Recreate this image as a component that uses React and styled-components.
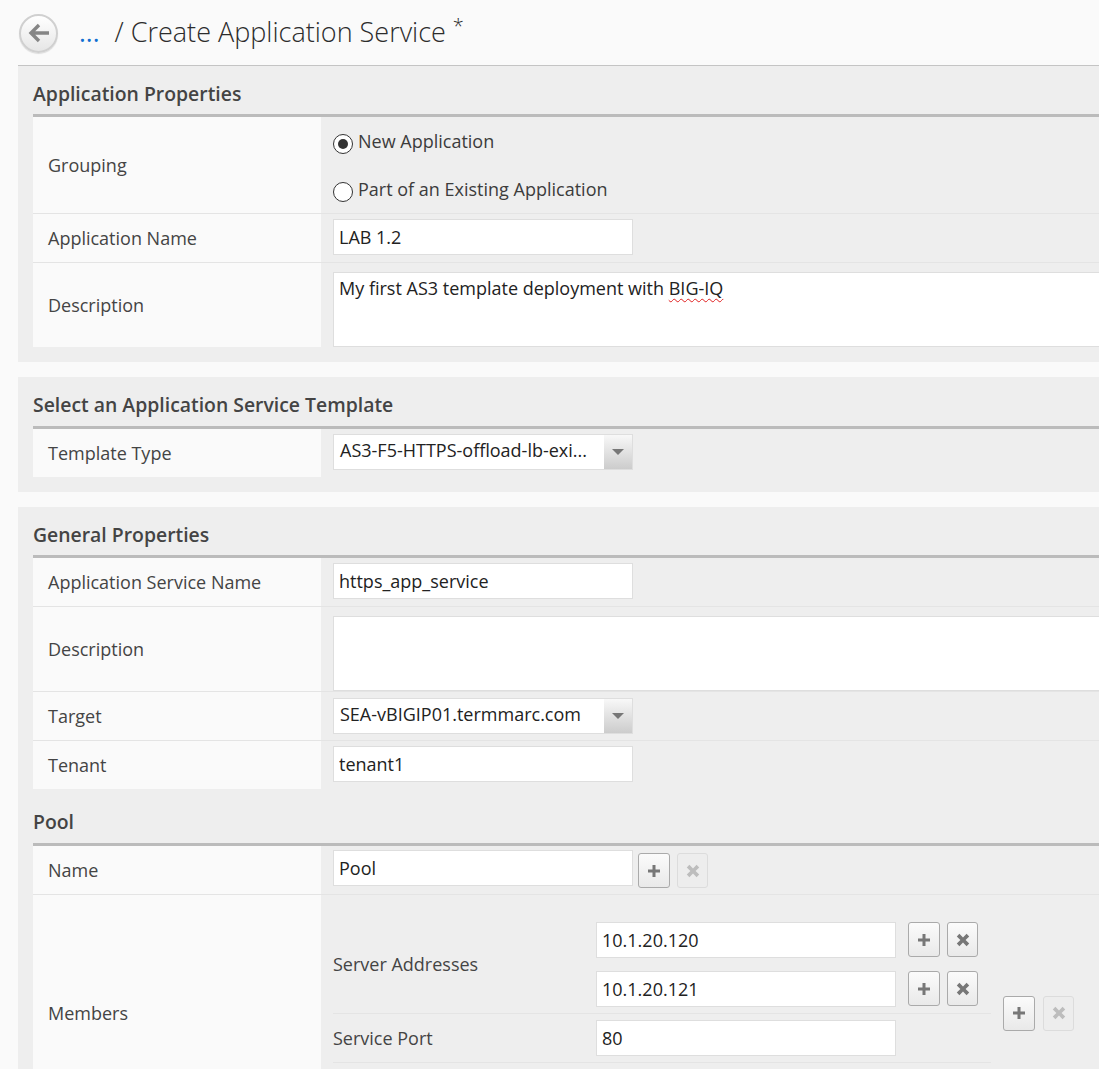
import React from 'react';
import styled, { createGlobalStyle } from 'styled-components';

const Global = createGlobalStyle`
  html, body { margin: 0; padding: 0; background: #fafafa; height: 1069px; overflow: hidden; }
  body { font-family: "Open Sans", "Noto Sans", "Liberation Sans", sans-serif; font-size: 18px; color: #3c3c3c; }
  * { box-sizing: border-box; }
`;
const Page = styled.div`width: 1099px; height: 1069px; overflow: hidden; background: #fafafa;`;
const Header = styled.header`display: flex; align-items: center; height: 65px; padding: 0 0 0 19px;`;
const BackButton = styled.button`
  width: 39px; height: 39px; margin-top: 1px; padding: 0; border-radius: 50%; border: 2px solid #d0d0d0;
  background: linear-gradient(#ffffff, #e6e6e6); display: flex; align-items: center; justify-content: center;
  box-shadow: 0 1px 1px rgba(0,0,0,.12);
`;
const Crumbs = styled.h1`
  margin: 0 0 2px 21px; font-size: 27px; font-weight: 300; color: #2c2c2c; white-space: nowrap; display: flex; align-items: baseline;
`;
const CrumbLink = styled.span`color: #0f6fd1; font-weight: 400; font-size: 26px; margin-right: 15px;`;
const Star = styled.span`font-size: 20px; margin-left: 7px; line-height: 0; position: relative; top: -9px;`;
const Main = styled.main`margin-left: 18px; border-top: 1px solid #c4c4c4; display: flex; flex-direction: column; gap: 15px;`;
const Section = styled.section`background: #eeeeee; padding: 0 0 15px 15px;`;
const SectionTitle = styled.h2`
  margin: 0; height: ${p => p.$h || 51}px; padding-bottom: ${p => p.$pb || 8}px; display: flex; align-items: flex-end;
  font-size: 19.4px; font-weight: 600; color: #444; border-bottom: 3px solid #bbbbbb; line-height: 26px;
`;
const Row = styled.div`
  display: grid; grid-template-columns: 288px 1fr; min-height: ${p => p.$h || 49}px;
  border-bottom: ${p => p.$last ? 'none' : '1px solid #e4e4e4'};
`;
const Label = styled.div`background: #fafafa; padding-left: 15px; display: flex; align-items: center; color: #444;`;
const Value = styled.div`
  padding: ${p => p.$pt ?? 5}px 0 0 12px; display: flex; min-width: 0;
  flex-direction: ${p => p.$col ? 'column' : 'row'}; align-items: flex-start; gap: ${p => p.$gap || 0}px;
`;
const Input = styled.input`
  width: 300px; height: 36px; padding: 0 5px; border: 1px solid #dedede; background: #fff; flex: none;
  font: 18px "Open Sans", "Noto Sans", sans-serif; color: #222; outline: none;
`;
const TextBox = styled.div`
  flex: none; width: 900px; height: 75px; padding: 2px 5px; background: #fff; border: 1px solid #dedede; color: #222; line-height: 26px;
`;
const Misspelled = styled.span`text-decoration: underline wavy #e02020 1px; text-underline-offset: 3px;`;
const Select = styled.div`
  width: 300px; height: 36px; border: 1px solid #dedede; background: #fff; display: flex; align-items: flex-start; justify-content: space-between;
  color: #222; padding-left: 6px; white-space: nowrap; line-height: 31px;
`;
const SelectArrow = styled.span`
  width: 28px; height: 34px; background: linear-gradient(#f8f8f8, #cccccc); display: flex; align-items: center; justify-content: center;
  &::after { content: ""; border-left: 6px solid transparent; border-right: 6px solid transparent; border-top: 6px solid #777; }
`;
const RadioLine = styled.label`display: flex; align-items: flex-start; height: 24px; gap: 5px; color: #3c3c3c; line-height: 24px;`;
const Radio = styled.span`
  width: 20px; height: 20px; border-radius: 50%; border: 1px solid #333; background: #fff; margin-top: 5px; flex: none;
  display: flex; align-items: center; justify-content: center;
  &::after { content: ""; width: 10px; height: 10px; border-radius: 50%; background: ${p => p.$on ? '#333' : 'transparent'}; }
`;
const IconBtn = styled.button`
  width: ${p => p.$w || 32}px; height: 35px; padding: 0; border-radius: 3px; flex: none;
  border: 1px solid ${p => p.disabled ? '#dcdcdc' : '#aaaaaa'};
  background: ${p => p.disabled ? '#ededed' : 'linear-gradient(#fbfbfb, #e9e9e9)'};
  color: ${p => p.disabled ? '#bdbdbd' : '#777'};
  display: flex; align-items: center; justify-content: center;
`;
const BtnPair = styled.div`display: flex; gap: ${p => p.$gap || 7}px; margin-left: ${p => p.$ml || 5}px; margin-top: ${p => p.$mt || 0}px; flex: none;`;
const InputLine = styled.div`display: flex; align-items: flex-start;`;
const MembersValue = styled.div`padding-left: 12px; display: flex; align-items: center;`;
const MemberFields = styled.div`width: 658px; padding-bottom: 47px; flex: none;`;
const FieldRow = styled.div`
  display: grid; grid-template-columns: 263px 1fr; align-items: center; padding: 6px 0; border-bottom: 1px solid #e4e4e4;
`;
const FieldLabel = styled.div`color: #444; margin-bottom: ${p => p.$lift || 0}px;`;
const AddressList = styled.div`display: flex; flex-direction: column; gap: 13px;`;

const Plus = () => (
  <svg width="14" height="14" viewBox="0 0 14 14" fill="currentColor"><path d="M5.5 1h3v4.5H13v3H8.5V13h-3V8.5H1v-3h4.5z"/></svg>
);
const Cross = () => (
  <svg width="14" height="14" viewBox="0 0 14 14" fill="currentColor"><path d="M3.4.8 7 4.4 10.6.8l2.6 2.6L9.6 7l3.6 3.6-2.6 2.6L7 9.6l-3.6 3.6-2.6-2.6L4.4 7 .8 3.4z"/></svg>
);
const Pair = ({ off, gap, ml, mt }) => (
  <BtnPair $gap={gap} $ml={ml} $mt={mt}>
    <IconBtn type="button" aria-label="Add"><Plus /></IconBtn>
    <IconBtn type="button" $w={31} disabled={off} aria-label="Remove"><Cross /></IconBtn>
  </BtnPair>
);
const In = ({ v }) => <Input readOnly value={v} />;

export default function App() {
  return (
    <Page>
      <Global />
      <Header>
        <BackButton type="button" aria-label="Back">
          <svg width="24" height="22" viewBox="0 0 24 22" fill="none" stroke="#858585" strokeWidth="3.4"><path d="M12 3 4 11l8 8M4.5 11H22" /></svg>
        </BackButton>
        <Crumbs><CrumbLink>...</CrumbLink>/ Create Application Service<Star>*</Star></Crumbs>
      </Header>
      <Main>
        <Section>
          <SectionTitle $h={51} $pb={7}>Application Properties</SectionTitle>
          <Row $h={97}>
            <Label>Grouping</Label>
            <Value $pt={12} $col $gap={24}>
              <RadioLine><Radio $on />New Application</RadioLine>
              <RadioLine><Radio />Part of an Existing Application</RadioLine>
            </Value>
          </Row>
          <Row><Label>Application Name</Label><Value><In v="LAB 1.2" /></Value></Row>
          <Row $h={84} $last>
            <Label>Description</Label>
            <Value $pt={9}><TextBox>My first AS3 template deployment with <Misspelled>BIG-IQ</Misspelled></TextBox></Value>
          </Row>
        </Section>
        <Section>
          <SectionTitle $h={52}>Select an Application Service Template</SectionTitle>
          <Row $h={48} $last>
            <Label>Template Type</Label>
            <Value><Select>AS3-F5-HTTPS-offload-lb-exi...<SelectArrow /></Select></Value>
          </Row>
        </Section>
        <Section>
          <SectionTitle $h={51} $pb={7}>General Properties</SectionTitle>
          <Row><Label>Application Service Name</Label><Value><In v="https_app_service" /></Value></Row>
          <Row $h={85}><Label>Description</Label><Value $pt={9}><TextBox /></Value></Row>
          <Row><Label>Target</Label><Value $pt={6}><Select>SEA-vBIGIP01.termmarc.com<SelectArrow /></Select></Value></Row>
          <Row $h={48} $last><Label>Tenant</Label><Value><In v="tenant1" /></Value></Row>
          <SectionTitle $h={57}>Pool</SectionTitle>
          <Row>
            <Label>Name</Label>
            <Value $pt={4}><In v="Pool" /><Pair off mt={3} /></Value>
          </Row>
          <Row $h={236} $last>
            <Label>Members</Label>
            <MembersValue>
              <MemberFields>
                <FieldRow>
                  <FieldLabel $lift={2}>Server Addresses</FieldLabel>
                  <AddressList>
                    <InputLine><In v="10.1.20.120" /><Pair ml={12} /></InputLine>
                    <InputLine><In v="10.1.20.121" /><Pair ml={12} /></InputLine>
                  </AddressList>
                </FieldRow>
                <FieldRow>
                  <FieldLabel>Service Port</FieldLabel>
                  <InputLine><In v="80" /></InputLine>
                </FieldRow>
              </MemberFields>
              <Pair off gap={8} ml={12} />
            </MembersValue>
          </Row>
        </Section>
      </Main>
    </Page>
  );
}
